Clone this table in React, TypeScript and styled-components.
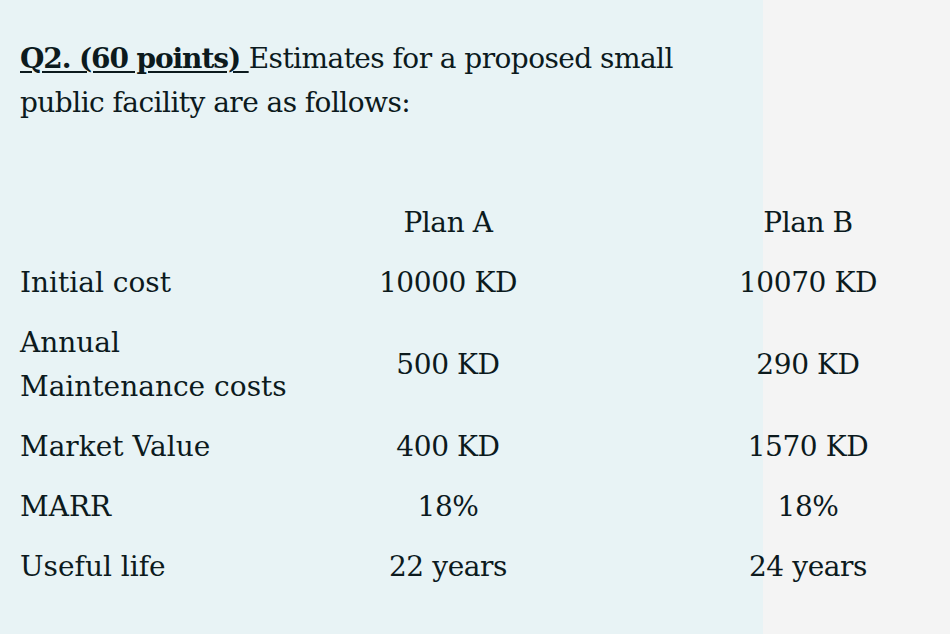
import React from "react";
import styled, { createGlobalStyle } from "styled-components";

const Global = createGlobalStyle`
  html, body { margin: 0; padding: 0; }
  body {
    width: 950px;
    height: 634px;
    overflow: hidden;
    background: linear-gradient(to right, #e8f3f5 0, #e8f3f5 763px, #f4f4f4 763px, #f4f4f4 100%);
  }
`;

const Page = styled.div`
  box-sizing: border-box;
  width: 950px;
  height: 634px;
  padding: 37px 0 0 20px;
  font-family: "DejaVu Serif", "Liberation Serif", serif;
  font-size: 28px;
  color: #0c1a1d;
`;

const Heading = styled.p`
  margin: 0;
  line-height: 44px;
  width: 700px;
  letter-spacing: -0.55px;
`;

const Tag = styled.span`
  font-weight: 700;
  letter-spacing: -1.1px;
  text-decoration: underline;
  text-decoration-thickness: 2px;
  text-underline-offset: 3px;
`;

const Table = styled.div`
  margin-top: 76px;
  display: grid;
  grid-template-columns: 308px 240px 120px 240px;
  row-gap: 16px;
  line-height: 44px;
`;

const Label = styled.div`
  grid-column: 1;
  white-space: nowrap;
`;

const Cell = styled.div<{ $col: number }>`
  grid-column: ${(p) => p.$col};
  align-self: center;
  text-align: center;
  white-space: nowrap;
  letter-spacing: -0.4px;
`;

const rows: { label: React.ReactNode; a: string; b: string }[] = [
  { label: "Initial cost", a: "10000 KD", b: "10070 KD" },
  {
    label: (
      <>
        Annual
        <br />
        Maintenance costs
      </>
    ),
    a: "500 KD",
    b: "290 KD",
  },
  { label: "Market Value", a: "400 KD", b: "1570 KD" },
  { label: "MARR", a: "18%", b: "18%" },
  { label: "Useful life", a: "22 years", b: "24 years" },
];

export default function App() {
  return (
    <>
      <Global />
      <Page>
        <Heading>
          <Tag>Q2. (60 points) </Tag>Estimates for a proposed small public facility are as follows:
        </Heading>
        <Table>
          <Label />
          <Cell $col={2}>Plan A</Cell>
          <Cell $col={4}>Plan B</Cell>
          {rows.map((r, i) => (
            <React.Fragment key={i}>
              <Label>{r.label}</Label>
              <Cell $col={2}>{r.a}</Cell>
              <Cell $col={4}>{r.b}</Cell>
            </React.Fragment>
          ))}
        </Table>
      </Page>
    </>
  );
}
